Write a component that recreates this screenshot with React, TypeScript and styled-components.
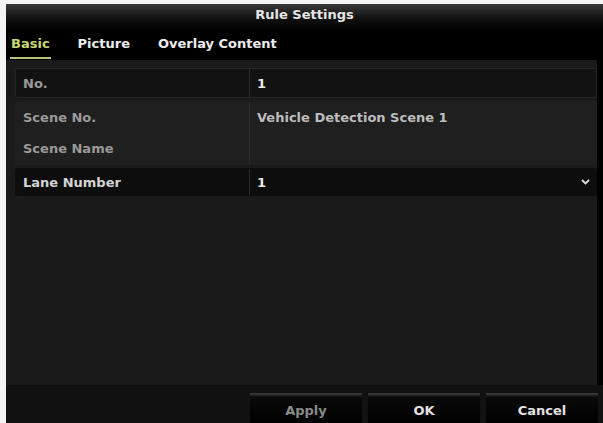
import React from "react";
import styled, { createGlobalStyle } from "styled-components";

const Global = createGlobalStyle`
  html, body { margin: 0; padding: 0; background: #ffffff; }
  body { width: 603px; height: 423px; overflow: hidden; font-family: "DejaVu Sans", "Liberation Sans", sans-serif; }
`;

const Frame = styled.div`
  width: 603px;
  height: 423px;
  box-sizing: border-box;
  padding: 4px 0 0 6px;
  background: #f4f4f4;
`;

const Window = styled.div`
  height: 100%;
  display: flex;
  flex-direction: column;
  background: #000;
`;

const TitleBar = styled.div`
  height: 26px;
  flex: none;
  display: flex;
  align-items: center;
  justify-content: center;
  background: linear-gradient(#3a3a3a 0%, #141414 50%, #000 100%);
  color: #e6e6e6;
  font-weight: bold;
  font-size: 13px;
  padding-bottom: 5px;
  box-sizing: border-box;
`;

const TabBar = styled.div`
  height: 30px;
  flex: none;
  display: flex;
  align-items: flex-start;
  gap: 26px;
  padding: 6px 0 0 4px;
  box-sizing: border-box;
  background: #000;
`;

const Tab = styled.div<{ $active?: boolean }>`
  color: ${(p) => (p.$active ? "#c9d86e" : "#ececec")};
  font-weight: bold;
  font-size: 13px;
  line-height: 16px;
  padding: 0 1px 5px;
  border-bottom: 2px solid ${(p) => (p.$active ? "#b9c47a" : "transparent")};
`;

const Body = styled.div`
  flex: 1;
  display: flex;
  flex-direction: column;
  gap: 3px;
  padding: 8px 0 0 9px;
  background: #1a1a1a;
  margin-right: 6px;
`;

const Group = styled.div<{ $bg: string; $border?: boolean }>`
  display: flex;
  flex-direction: column;
  background: ${(p) => p.$bg};
  border: 1px solid ${(p) => (p.$border ? "#262626" : "transparent")};
  border-radius: 3px;
`;

const Row = styled.div<{ $h: number }>`
  height: ${(p) => p.$h}px;
  display: grid;
  grid-template-columns: 234px 1fr;
  align-items: center;
`;

const Label = styled.div<{ $bright?: boolean }>`
  height: 100%;
  display: flex;
  align-items: center;
  padding-left: 7px;
  border-right: 1px solid #2c2c2c;
  color: ${(p) => (p.$bright ? "#d4d4d4" : "#9a9a9a")};
  font-size: 13px;
  font-weight: bold;
`;

const Value = styled.div`
  height: 100%;
  display: flex;
  align-items: center;
  justify-content: space-between;
  padding: 0 6px 0 7px;
  color: #e8e8e8;
  font-size: 13px;
  font-weight: bold;
`;

const ValueGrey = styled(Value)`
  color: #bdbdbd;
`;

const Footer = styled.div`
  height: 38px;
  flex: none;
  display: flex;
  justify-content: flex-end;
  align-items: flex-end;
  gap: 6px;
  padding-right: 5px;
  background: #111;
`;

const Button = styled.div<{ $disabled?: boolean }>`
  width: 112px;
  height: 30px;
  box-sizing: border-box;
  display: flex;
  align-items: center;
  justify-content: center;
  background: linear-gradient(#3c3c3c 0px, #2a2a2a 2px, #0a0a0a 4px, #000 100%);
  color: ${(p) => (p.$disabled ? "#8a8a8a" : "#e2e2e2")};
  font-size: 13px;
  font-weight: bold;
  padding-top: 4px;
`;

const Chevron = () => (
  <svg width="9" height="6" viewBox="0 0 9 6">
    <path d="M1 1 L4.5 4.5 L8 1" stroke="#e0e0e0" strokeWidth="1.8" fill="none" />
  </svg>
);

export default function App() {
  return (
    <>
      <Global />
      <Frame>
        <Window>
          <TitleBar>Rule Settings</TitleBar>
          <TabBar>
            <Tab $active>Basic</Tab>
            <Tab>Picture</Tab>
            <Tab>Overlay Content</Tab>
          </TabBar>
          <Body>
            <Group $bg="#121212" $border>
              <Row $h={28}>
                <Label>No.</Label>
                <Value>1</Value>
              </Row>
            </Group>
            <Group $bg="#1f1f1f">
              <Row $h={31}>
                <Label>Scene No.</Label>
                <ValueGrey>Vehicle Detection Scene 1</ValueGrey>
              </Row>
              <Row $h={31}>
                <Label>Scene Name</Label>
                <ValueGrey />
              </Row>
            </Group>
            <Group $bg="#0d0d0d">
              <Row $h={26}>
                <Label $bright>Lane Number</Label>
                <Value>
                  1
                  <Chevron />
                </Value>
              </Row>
            </Group>
          </Body>
          <Footer>
            <Button $disabled>Apply</Button>
            <Button>OK</Button>
            <Button>Cancel</Button>
          </Footer>
        </Window>
      </Frame>
    </>
  );
}
